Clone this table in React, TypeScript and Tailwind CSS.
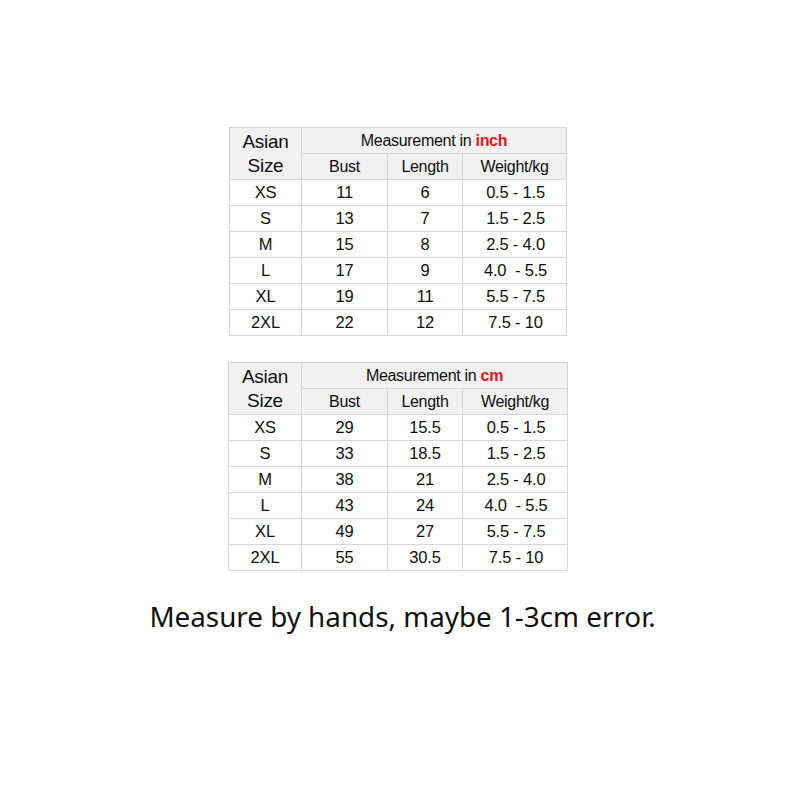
import React from "react";

type Row = [string, string, string, string];

const inchRows: Row[] = [
  ["XS", "11", "6", "0.5 - 1.5"],
  ["S", "13", "7", "1.5 - 2.5"],
  ["M", "15", "8", "2.5 - 4.0"],
  ["L", "17", "9", "4.0  - 5.5"],
  ["XL", "19", "11", "5.5 - 7.5"],
  ["2XL", "22", "12", "7.5 - 10"],
];

const cmRows: Row[] = [
  ["XS", "29", "15.5", "0.5 - 1.5"],
  ["S", "33", "18.5", "1.5 - 2.5"],
  ["M", "38", "21", "2.5 - 4.0"],
  ["L", "43", "24", "4.0  - 5.5"],
  ["XL", "49", "27", "5.5 - 7.5"],
  ["2XL", "55", "30.5", "7.5 - 10"],
];

const SizeTable: React.FC<{ unit: string; rows: Row[]; wide?: boolean; className?: string }> = ({
  unit,
  rows,
  wide,
  className,
}) => {
  const cell = "border border-[#d6d6d6] p-0 text-center align-middle";
  const head = `${cell} font-normal text-[16px] tracking-[-0.3px]`;
  return (
    <table
      className={`border-collapse table-fixed text-[#0e0e0e] ${className ?? ""}`}
      style={{ fontFamily: '"Liberation Sans", Arial, sans-serif' }}
    >
      <colgroup>
        <col className={wide ? "w-[73px]" : "w-[72px]"} />
        <col className="w-[86px]" />
        <col className="w-[75px]" />
        <col className={wide ? "w-[105px]" : "w-[104px]"} />
      </colgroup>
      <thead>
        <tr className="h-[26px] bg-[#f1f1f1]">
          <th rowSpan={2} className={`${cell} font-normal text-[19px] leading-[24px] tracking-[-0.3px]`}>
            Asian
            <br />
            Size
          </th>
          <th colSpan={3} className={head}>
            Measurement in <span className="font-bold text-[#e8141c]">{unit}</span>
          </th>
        </tr>
        <tr className="h-[26px] bg-[#f1f1f1]">
          <th className={head}>Bust</th>
          <th className={head}>Length</th>
          <th className={head}>Weight/kg</th>
        </tr>
      </thead>
      <tbody>
        {rows.map((r) => (
          <tr key={r[0]} className="h-[26px] bg-white text-[16.5px] tracking-[-0.2px]">
            <td className={cell}>{r[0]}</td>
            <td className={cell}>{r[1]}</td>
            <td className={cell}>{r[2]}</td>
            <td className={`${cell} whitespace-pre pl-[2px]`}>{r[3]}</td>
          </tr>
        ))}
      </tbody>
    </table>
  );
};

const App: React.FC = () => {
  return (
    <div className="w-[800px] h-[800px] bg-white flex flex-col">
      <div className="pt-[127px] pl-[229px]">
        <SizeTable unit="inch" rows={inchRows} />
        <SizeTable unit="cm" rows={cmRows} wide className="mt-[26px] -ml-px" />
      </div>
      <p
        className="mt-[28px] text-center text-[27.8px] text-[#111] leading-[34px] pl-[5px]"
        style={{ fontFamily: '"Noto Sans", "Open Sans", sans-serif' }}
      >
        Measure by hands, maybe 1-3cm error.
      </p>
    </div>
  );
};

export default App;
